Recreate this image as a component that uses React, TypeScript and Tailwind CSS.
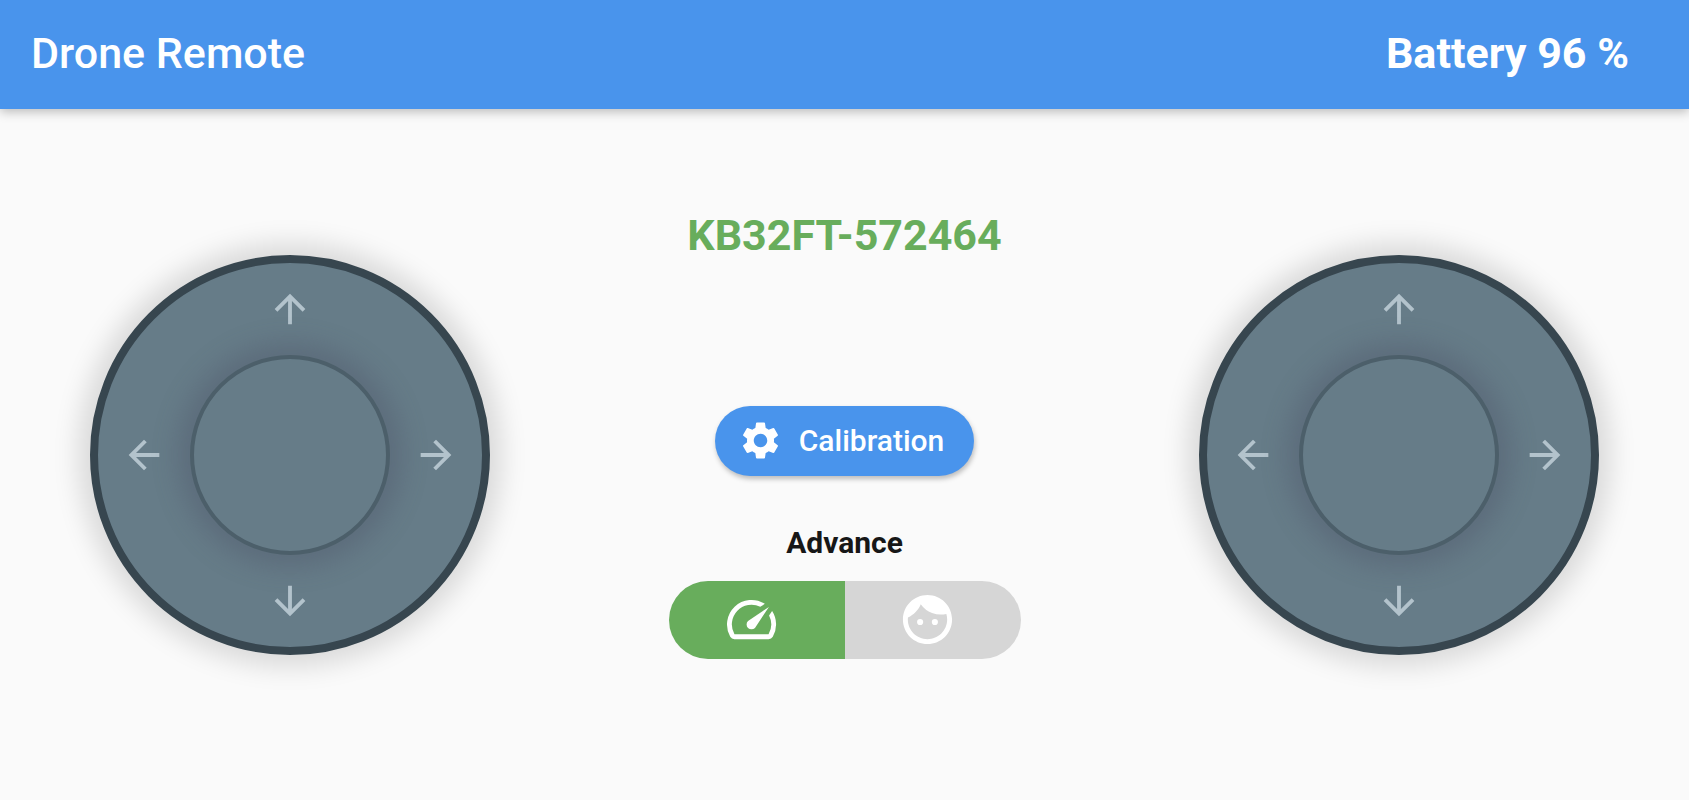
import { useState } from 'react'
import { MdArrowBack, MdArrowDownward, MdArrowForward, MdArrowUpward, MdFace, MdSettings, MdSpeed } from 'react-icons/md'

const drone = {
  serial: 'KB32FT-572464',
  battery: 96,
}

const modes = [
  { id: 'advance', label: 'Advance', icon: MdSpeed },
  { id: 'beginner', label: 'Beginner', icon: MdFace },
]

function Joystick({ name }: { name: string }) {
  return (
    <div
      role="group"
      aria-label={name}
      className="grid size-[400px] shrink-0 grid-cols-[1fr_200px_1fr] grid-rows-[1fr_200px_1fr] place-items-center rounded-full border-8 border-[#37464f] bg-[#667c88] text-[#b3c3cc] shadow-[0_0_26px_12px_rgba(0,0,0,0.13)]"
    >
      <MdArrowUpward size={46} className="col-start-2 row-start-1" />
      <MdArrowBack size={46} className="col-start-1 row-start-2" />
      {/* Stick */}
      <button
        type="button"
        aria-label={`${name} stick`}
        className="col-start-2 row-start-2 size-[200px] rounded-full border-4 border-[#4c5f6a] bg-[#667c88] shadow-[0_0_26px_12px_rgba(70,75,95,0.32)]"
      />
      <MdArrowForward size={46} className="col-start-3 row-start-2" />
      <MdArrowDownward size={46} className="col-start-2 row-start-3" />
    </div>
  )
}

export default function App() {
  const [mode, setMode] = useState('advance')
  const current = modes.find((m) => m.id === mode)

  return (
    <div className="flex min-h-screen flex-col bg-[#fafafa] font-[Roboto,sans-serif]">
      {/* App bar */}
      <header className="flex h-[109px] items-center justify-between bg-[#4994ec] pr-[60px] pb-[3px] pl-[31px] text-[43px] text-white shadow-[0_3px_10px_rgba(0,0,0,0.25)]">
        <h1 className="font-medium">Drone Remote</h1>
        <div className="font-bold">Battery {drone.battery} %</div>
      </header>

      <main className="flex flex-1 items-center justify-between px-[90px]">
        <Joystick name="Left joystick" />

        <div className="flex flex-col items-center pb-[41px]">
          <div className="text-[43px] leading-[50px] font-bold text-[#68ad5c]">{drone.serial}</div>

          <button
            type="button"
            className="mt-[146px] flex h-[70px] items-center gap-4 rounded-full bg-[#4994ec] pr-[30px] pl-[23px] text-[30px] font-medium text-white shadow-[1px_3px_5px_rgba(0,0,0,0.25)]"
          >
            <MdSettings size={45} />
            Calibration
          </button>

          <div className="mt-[49px] text-[30px] leading-9 font-bold text-[#171717]">{current?.label}</div>

          {/* Flight mode */}
          <div className="mt-5 flex h-[78px] w-[352px] overflow-hidden rounded-full">
            {modes.map((m) => (
              <button
                key={m.id}
                type="button"
                aria-label={m.label}
                aria-pressed={m.id === mode}
                onClick={() => setMode(m.id)}
                className={`flex flex-1 items-center justify-center pr-[11px] text-white ${m.id === mode ? 'bg-[#68ad5c]' : 'bg-[#d6d6d6]'}`}
              >
                <m.icon size={59} />
              </button>
            ))}
          </div>
        </div>

        <Joystick name="Right joystick" />
      </main>
    </div>
  )
}
